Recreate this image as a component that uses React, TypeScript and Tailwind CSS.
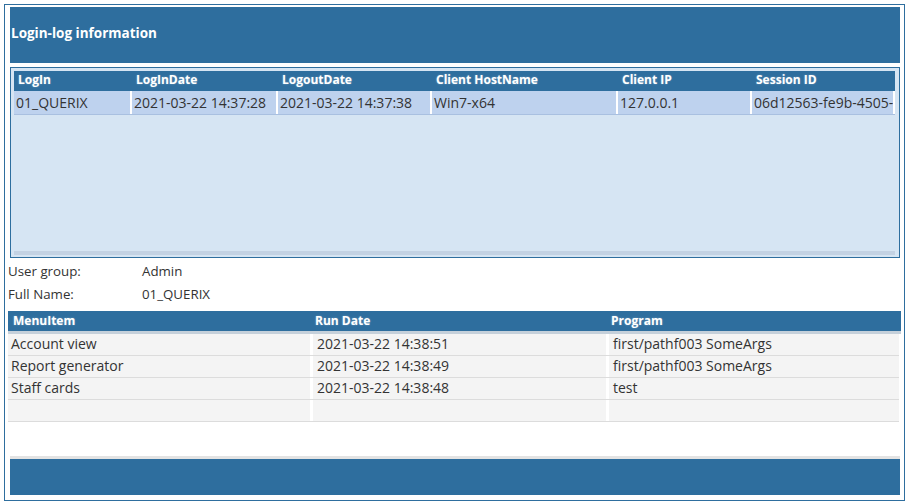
const font = { fontFamily: '"Open Sans", "Liberation Sans", sans-serif' }

const loginCols = [
  { title: 'LogIn', w: 'w-[116px]' },
  { title: 'LogInDate', w: 'w-[146px]' },
  { title: 'LogoutDate', w: 'w-[154px]' },
  { title: 'Client HostName', w: 'w-[186px]' },
  { title: 'Client IP', w: 'w-[134px]' },
  { title: 'Session ID', w: 'flex-1' },
]

const loginRow = ['01_QUERIX', '2021-03-22 14:37:28', '2021-03-22 14:37:38', 'Win7-x64', '127.0.0.1', '06d12563-fe9b-4505-b7a1']

const menuCols = [
  { title: 'MenuItem', w: 'w-[302px]' },
  { title: 'Run Date', w: 'w-[296px]' },
  { title: 'Program', w: 'flex-1' },
]

const menuRows = [
  ['Account view', '2021-03-22 14:38:51', 'first/pathf003 SomeArgs'],
  ['Report generator', '2021-03-22 14:38:49', 'first/pathf003 SomeArgs'],
  ['Staff cards', '2021-03-22 14:38:48', 'test'],
  ['', '', ''],
]

const headShadow = { textShadow: '0 0 2px rgba(255,255,255,0.35)' }

export default function App() {
  return (
    <div className="w-[906px] h-[502px] bg-white pt-1 pl-1 pr-[1px] pb-[1px]" style={font}>
      <div className="h-full border border-[#2e6e9e] flex flex-col px-[3px] pt-[2px]">
        {/* title bar */}
        <div className="ml-[2px] mr-[1px] h-[56px] bg-[#2e6e9e] flex items-center pl-[1px] pb-[4px]">
          <span className="text-white font-bold text-[13.5px]">Login-log information</span>
        </div>

        {/* login table */}
        <div className="ml-[2px] mr-[1px] mt-[4px] h-[191px] border border-[#2e6e9e] bg-[#d6e5f3] flex flex-col px-[3px] pt-[3px]">
          <div className="flex h-[20px] bg-[#2e6e9e] mr-[1px]">
            {loginCols.map((c, i) => (
              <div
                key={c.title}
                className={`${c.w} ${i > 0 ? 'pl-[6px]' : 'pl-[4px]'} pb-[3px] flex items-center text-white font-bold text-[12px]`}
                style={headShadow}
              >
                {c.title}
              </div>
            ))}
          </div>
          <div className="flex h-[24px] bg-[#bed2ee] border-b border-[#a9c0e0] mr-[1px] overflow-hidden">
            {loginRow.map((v, i) => (
              <div
                key={i}
                className={`${loginCols[i].w} ${i > 0 ? 'border-l-2 border-white' : ''} pl-[2px] flex items-center text-[14px] text-[#333] whitespace-nowrap overflow-hidden`}
              >
                {v}
              </div>
            ))}
            <div className="w-[2px] bg-white" />
          </div>
          <div className="flex-1" />
          <div className="h-[4px] bg-[#c3d2e3] mb-[2px] mr-[1px]" />
        </div>

        {/* user info */}
        <div className="flex flex-col text-[13.3px] text-[#333] mt-[2px]">
          <div className="flex h-[23px] items-center">
            <span className="w-[134px]">User group:</span>
            <span>Admin</span>
          </div>
          <div className="flex h-[23px] items-center">
            <span className="w-[134px]">Full Name:</span>
            <span>01_QUERIX</span>
          </div>
        </div>

        {/* menu table */}
        <div className="mt-[5px] flex flex-col">
          <div className="flex h-[20px] bg-[#2e6e9e]">
            {menuCols.map(c => (
              <div key={c.title} className={`${c.w} pl-[5px] pb-[1px] flex items-center text-white font-bold text-[12px]`} style={headShadow}>
                {c.title}
              </div>
            ))}
          </div>
          <div className="h-[3px] bg-[#c5d0da]" />
          {menuRows.map((r, ri) => (
            <div key={ri} className="flex h-[22px] bg-[#f4f4f4] border-b border-[#dcdcdc] mr-[2px]">
              {r.map((v, i) => (
                <div
                  key={i}
                  className={`${menuCols[i].w} ${i > 0 ? 'border-l-3 border-white pl-[4px]' : 'pl-[3px]'} pb-[3px] flex items-center text-[14px] text-[#333] whitespace-nowrap`}
                >
                  {v}
                </div>
              ))}
            </div>
          ))}
        </div>

        <div className="h-[34px]" />
        <div className="h-[3px] bg-[#e3e3e3] ml-[2px] mr-[1px]" />
        <div className="ml-[2px] mr-[1px] h-[36px] bg-[#2e6e9e]" />
      </div>
    </div>
  )
}
